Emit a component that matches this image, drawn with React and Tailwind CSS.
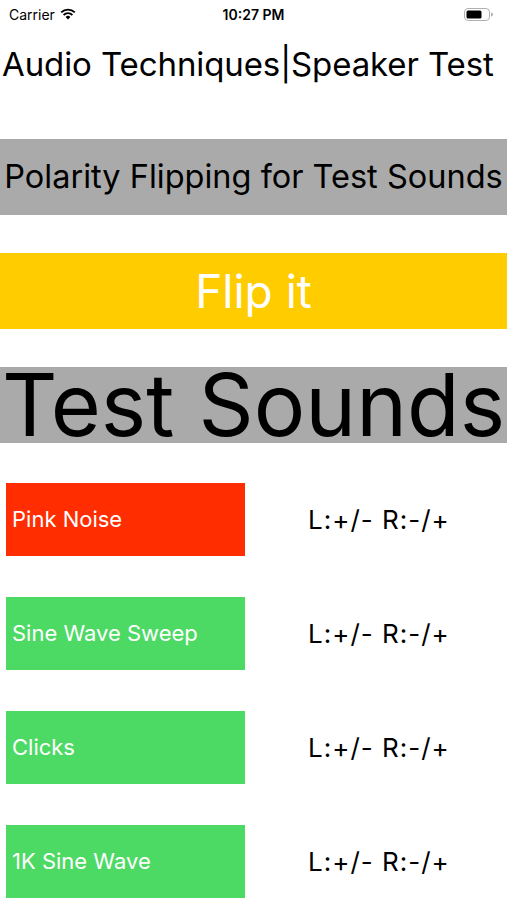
export default function App() {
  const rows = [
    { name: 'Pink Noise', color: 'bg-[#ff2d00]' },
    { name: 'Sine Wave Sweep', color: 'bg-[#4cd964]' },
    { name: 'Clicks', color: 'bg-[#4cd964]' },
    { name: '1K Sine Wave', color: 'bg-[#4cd964]' },
  ]

  return (
    <div className="w-[507px] h-[900px] bg-white overflow-hidden text-black" style={{ fontFamily: 'Inter, "Noto Sans", sans-serif' }}>
      {/* Status bar */}
      <div className="h-[28px] flex items-center justify-between px-[9px] text-[14px]">
        <div className="flex items-center gap-[5px] w-[120px]">
          <span>Carrier</span>
          <svg width="16" height="12" viewBox="0 0 16 12">
            <path d="M8 11.5 L5.6 9 A3.4 3.4 0 0 1 10.4 9 Z" fill="#000" />
            <path d="M3.6 7 A6.2 6.2 0 0 1 12.4 7" stroke="#000" strokeWidth="1.8" fill="none" />
            <path d="M1.2 4.4 A9.6 9.6 0 0 1 14.8 4.4" stroke="#000" strokeWidth="1.8" fill="none" />
          </svg>
        </div>
        <span className="font-semibold">10:27 PM</span>
        <div className="w-[120px] flex justify-end pr-[5px]">
          <svg width="29" height="13" viewBox="0 0 29 13">
            <rect x="0.5" y="0.5" width="25" height="12" rx="3.5" fill="none" stroke="#b0b0b0" />
            <rect x="2.5" y="2.5" width="15" height="8" rx="1.5" fill="#000" />
            <path d="M27 4.5 A2 2 0 0 1 27 8.5 Z" fill="#b0b0b0" />
          </svg>
        </div>
      </div>

      {/* Title */}
      <div className="mt-[16px] h-[40px] leading-[40px] text-[33px] pl-[2px] whitespace-nowrap tracking-[-0.1px]">
        Audio Techniques|Speaker Test
      </div>

      {/* Polarity header */}
      <div className="mt-[55px] h-[76px] bg-[#aaaaaa] flex items-center justify-center text-[32.5px] whitespace-nowrap">
        Polarity Flipping for Test Sounds
      </div>

      {/* Flip button */}
      <button className="mt-[38px] w-full h-[76px] bg-[#ffcc00] flex items-center justify-center text-white text-[46px]">
        Flip it
      </button>

      {/* Test Sounds header */}
      <div className="mt-[38px] h-[76px] bg-[#aaaaaa] flex items-center justify-center text-[86px] leading-none whitespace-nowrap">
        Test Sounds
      </div>

      {/* Sound rows */}
      <div className="mt-[40px] flex flex-col gap-[41px]">
        {rows.map((r) => (
          <div key={r.name} className="flex items-center h-[73px]">
            <button className={`ml-[6px] w-[239px] h-[73px] ${r.color} text-white text-[22px] text-left pl-[6px]`}>
              {r.name}
            </button>
            <div className="ml-[63px] text-[26px] tracking-[1px] whitespace-nowrap">L:+/- R:-/+</div>
          </div>
        ))}
      </div>
    </div>
  )
}
